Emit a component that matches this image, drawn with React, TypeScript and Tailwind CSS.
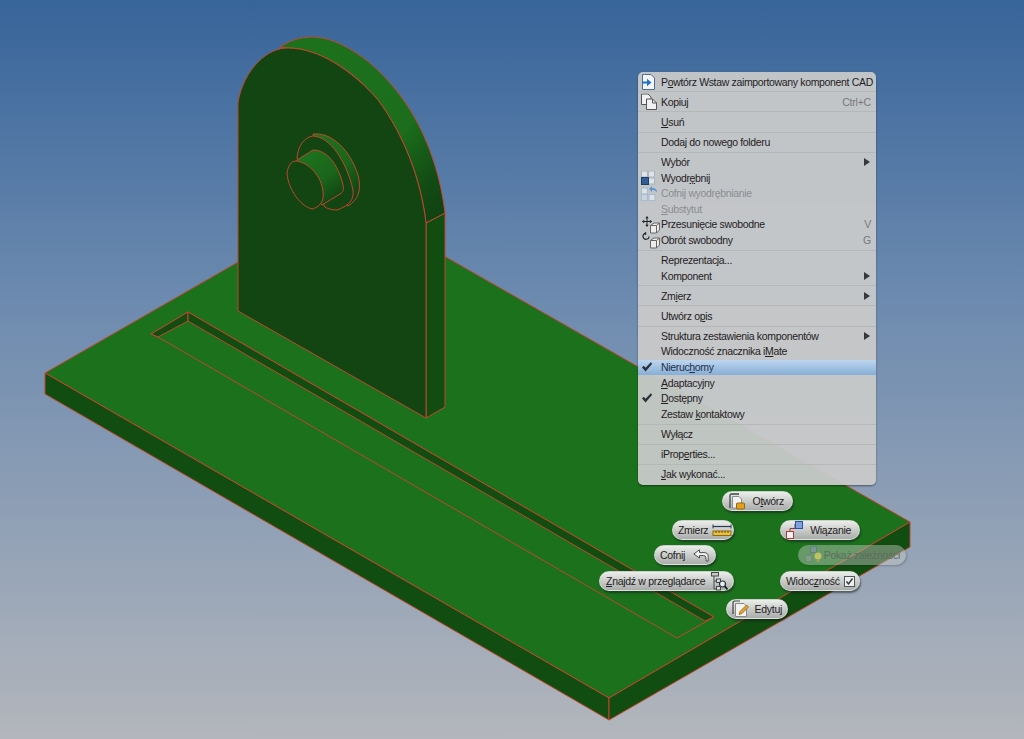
import React from "react";

const F = "font-['Liberation_Sans',Arial,sans-serif]";

function Scene() {
  return (
    <svg viewBox="0 0 1024 739" className="block w-[1024px] h-[739px]">
      <defs>
        <linearGradient id="sky" x1="0" y1="0" x2="0" y2="1">
          <stop offset="0" stopColor="#37649a" />
          <stop offset="0.4" stopColor="#6c8aaf" />
          <stop offset="1" stopColor="#b3b6bc" />
        </linearGradient>
        <linearGradient id="rim" x1="0" y1="0" x2="1" y2="1">
          <stop offset="0" stopColor="#1d721d" />
          <stop offset="0.62" stopColor="#1c6e1c" />
          <stop offset="0.85" stopColor="#124a14" />
          <stop offset="1" stopColor="#104012" />
        </linearGradient>
        <linearGradient id="boss" x1="0.2" y1="0.05" x2="0.8" y2="0.95">
          <stop offset="0" stopColor="#1d721d" />
          <stop offset="0.55" stopColor="#1a661b" />
          <stop offset="1" stopColor="#114212" />
        </linearGradient>
      </defs>
      <rect width="1024" height="739" fill="url(#sky)" />
      <g stroke="#c2452e" strokeWidth="1" strokeLinejoin="round">
        <path d="M45 373 L346 200 L910 522 L609 698 Z" fill="#1c711d" />
        <path d="M45 373 L609 698 L609 720 L45 394 Z" fill="#114c10" />
        <path d="M609 698 L910 522 L910 547 L609 720 Z" fill="#114c10" />
        <path d="M188 312 L714 617 L677 638 L158 337 L151 334 Z" fill="#1c711d" />
        <path d="M151 334 L188 312 L188 321 L158 337 Z" fill="#114c10" />
        <path d="M188 312 L714 617 L705 621 L188 321 Z" fill="#114c10" />
        <path d="M426 418 L445 407 L445 213 L426 223 Z" fill="#114c10" />
        <path d="M280 47 C291 40 301 37 311 37 C324 37 336 41 348 48 C368 59 386 76 402 98 C424 128 440 170 445 213 L426 223 C421 180 404 135 378 100 C355 72 322 50 290 48 C285 48 283 47 280 47 Z" fill="url(#rim)" />
        <path d="M238 311 L238 103 C240 88 248 72 258 62 C268 52 278 48 288 48 C318 48 352 70 378 100 C404 135 421 180 426 223 L426 418 Z" fill="#124512" />
        <path d="M313 134 C332 132 350 150 358 175 C362 190 358 200 348 206 L330 196 Z" fill="url(#boss)" />
        <path d="M297 158 C298 145 305 137 313 136 C330 137 346 160 353 190 C354 200 350 205 337 210 C332 210 328 209 325 207 Z" fill="#124512" />
        <path d="M297 160 L313 150 C327 150 338 164 343 185 C344 190 343 192 340 194 L322 205 L300 185 Z" fill="url(#boss)" />
        <path d="M287 173 C288 166 291 161 296 161 C308 162 322 176 323 192 C324 200 322 205 313 209 C302 208 288 190 287 173 Z" fill="#124512" />
      </g>
    </svg>
  );
}

function U({ children }: { children: React.ReactNode }) {
  return <span className="underline underline-offset-1">{children}</span>;
}

function IconRepeat() {
  return (
    <svg width="15" height="16" viewBox="0 0 15 16">
      <path d="M3.5 .5H10L13.5 4V15.5H1.5V.5Z" fill="#f4f6f9" stroke="#4c6c98" />
      <path d="M1 7.5H6V4.8L10.5 8.5 6 12.2V9.5H1Z" fill="#1f73c9" />
    </svg>
  );
}
function IconCopy() {
  return (
    <svg width="17" height="17" viewBox="0 0 17 17" fill="#f1f1f1" stroke="#555">
      <path d="M.5 .5H7L10 3.5V11H.5Z" />
      <path d="M5.5 5.5H11.5L15.5 9.5V16H5.5Z" />
      <path d="M11.5 5.5V9.5H15.5" fill="none" />
    </svg>
  );
}
function IconIsolate() {
  return (
    <svg width="15" height="15" viewBox="0 0 15 15">
      <rect x=".5" y=".5" width="6" height="6" fill="#dfe3e7" stroke="#a9b3bd" />
      <rect x="7.5" y=".5" width="6" height="6" fill="#dfe3e7" stroke="#a9b3bd" />
      <rect x="7.5" y="7.5" width="6" height="6" fill="#dfe3e7" stroke="#a9b3bd" />
      <rect x=".5" y="7" width="7" height="7" fill="#2f5f95" stroke="#1e3f66" />
    </svg>
  );
}
function IconUndoIsolate() {
  return (
    <svg width="18" height="17" viewBox="0 0 18 17">
      <rect x=".5" y="3.5" width="6" height="6" fill="#dce1e6" stroke="#a7bace" />
      <rect x=".5" y="10" width="6" height="6" fill="#c8d3de" stroke="#a7bace" />
      <rect x="8" y="10" width="6" height="6" fill="#dce1e6" stroke="#a7bace" />
      <path d="M8 4.5 11 1.5V3.5C14 3.5 16 4.5 16 8 14.5 6 13 5.5 11 5.5V7.5Z" fill="#5e97cf" />
    </svg>
  );
}
function IconMove() {
  return (
    <svg width="20" height="18" viewBox="0 0 20 18">
      <path d="M6 1V10M1.5 5.5H10.5" stroke="#222" strokeWidth="1" fill="none" />
      <path d="M6 0 4.3 2.2H7.7ZM6 11 4.3 8.8H7.7ZM1 5.5 3.2 3.8V7.2ZM11 5.5 8.8 3.8V7.2Z" fill="#222" />
      <path d="M9.5 9.5 13 7H18.5V14L15.5 17H9.5Z" fill="#ececec" stroke="#666" />
      <path d="M9.5 9.5H15.5V17M15.5 9.5 18.5 7" fill="none" stroke="#666" />
    </svg>
  );
}
function IconRotate() {
  return (
    <svg width="20" height="18" viewBox="0 0 20 18">
      <path d="M8 5.5A3 3 0 1 1 4 2.5" fill="none" stroke="#222" strokeWidth="1.1" />
      <path d="M5.2 .8 2.6 2.5 5.2 4.2Z" fill="#222" />
      <path d="M9.5 9.5 13 7H18.5V14L15.5 17H9.5Z" fill="#ececec" stroke="#666" />
      <path d="M9.5 9.5H15.5V17M15.5 9.5 18.5 7" fill="none" stroke="#666" />
    </svg>
  );
}
function IconCheck() {
  return (
    <svg width="12" height="11" viewBox="0 0 12 11">
      <path d="M1 6 2.8 4.2 4.6 6.3 9.8 .8 11.2 2.2 4.6 10Z" fill="#2a3138" />
    </svg>
  );
}

type Row =
  | { k: "sep" }
  | {
      k?: "row";
      t: React.ReactNode;
      icon?: React.ReactNode;
      sc?: string;
      sub?: boolean;
      off?: boolean;
      hi?: boolean;
    };

const rows: Row[] = [
  { t: <>P<U>o</U>wtórz Wstaw zaimportowany komponent CAD</>, icon: <IconRepeat /> },
  { k: "sep" },
  { t: "Kopiuj", icon: <IconCopy />, sc: "Ctrl+C" },
  { k: "sep" },
  { t: <><U>U</U>suń</> },
  { k: "sep" },
  { t: <>Dodaj do nowe<U>g</U>o folderu</> },
  { k: "sep" },
  { t: "Wybór", sub: true },
  { t: <>Wyodr<U>ę</U>bnij</>, icon: <IconIsolate /> },
  { t: "Cofnij wyodrębnianie", icon: <IconUndoIsolate />, off: true },
  { t: <><U>S</U>ubstytut</>, off: true },
  { t: "Przesunięcie swobodne", icon: <IconMove />, sc: "V" },
  { t: "Obrót swobodny", icon: <IconRotate />, sc: "G" },
  { k: "sep" },
  { t: "Reprezentacja..." },
  { t: "Komponent", sub: true },
  { k: "sep" },
  { t: <>Zm<U>i</U>erz</>, sub: true },
  { k: "sep" },
  { t: <>Utwórz o<U>p</U>is</> },
  { k: "sep" },
  { t: "Struktura zestawienia komponentów", sub: true },
  { t: <>Widoczność znacznika i<U>M</U>ate</> },
  { t: <>Nieruc<U>h</U>omy</>, icon: <IconCheck />, hi: true },
  { t: <><U>A</U>daptacyjny</> },
  { t: <><U>D</U>ostępny</>, icon: <IconCheck /> },
  { t: <>Zestaw <U>k</U>ontaktowy</> },
  { k: "sep" },
  { t: "Wyłącz" },
  { k: "sep" },
  { t: <>iProp<U>e</U>rties...</> },
  { k: "sep" },
  { t: <><U>J</U>ak wykonać...</> },
];

function Menu() {
  return (
    <div className={`absolute left-[638px] top-[72px] w-[238px] pt-[2px] pb-[3px] rounded-[5px] bg-[#c8c9c9]/95 shadow-[0_1px_2px_rgba(0,0,0,0.45)] text-[10.5px] leading-none text-[#1f2123] ${F}`}>
      {rows.map((r, i) =>
        r.k === "sep" ? (
          <div key={i} className="h-[4.5px] flex items-center">
            <div className="h-px flex-1 bg-[#b6b7b7]" />
          </div>
        ) : (
          <div
            key={i}
            className={`relative h-[15.6px] pl-[23px] pr-[5px] flex items-center ${r.hi ? "bg-gradient-to-b from-[#bdd6ef] to-[#87aed6] text-[#1d2f4a]" : ""} ${r.off ? "text-[#8b8d8f]" : ""}`}
          >
            {r.icon && <span className="absolute left-[3px] top-1/2 -translate-y-1/2 flex">{r.icon}</span>}
            <span className="flex-1 whitespace-nowrap tracking-[-0.34px]">{r.t}</span>
            {r.sc && <span className="text-[#77797b] tracking-[-0.2px]">{r.sc}</span>}
            {r.sub && <span className="w-0 h-0 mr-[1px] border-y-[4.5px] border-y-transparent border-l-[6px] border-l-[#35383c]" />}
          </div>
        )
      )}
    </div>
  );
}

function Pill({
  className,
  children,
}: {
  className: string;
  children: React.ReactNode;
}) {
  return (
    <div
      className={`absolute h-[20px] rounded-[10px] flex items-center justify-between whitespace-nowrap text-[10.5px] leading-none tracking-[-0.3px] text-[#1e2022] border border-[#d9dbd8]/70 bg-gradient-to-b from-[#eceeeb] to-[#a9acaa] shadow-[1px_2px_2px_rgba(20,30,30,0.55)] ${F} ${className}`}
    >
      {children}
    </div>
  );
}

const IOpen = () => (
  <svg width="17" height="17" viewBox="0 0 17 17">
    <path d="M1 15V2.5Q1 1 2.5 1H10" fill="none" stroke="#3d4447" strokeWidth="1.3" />
    <path d="M3.5 3.5H10L12.5 6V15H3.5Z" fill="#f2f2f2" stroke="#8a8d8e" />
    <rect x="7.5" y="10" width="8" height="6" rx="1" fill="#e0a21e" stroke="#94690f" />
  </svg>
);
const IMeasure = () => (
  <svg width="20" height="14" viewBox="0 0 20 14">
    <path d="M1 3.5H19" stroke="#2a3a55" strokeWidth="1.2" />
    <path d="M1 1.5V5.5M19 1.5V5.5" stroke="#2a3a55" />
    <rect x="1" y="8" width="18" height="4.5" fill="#e9c042" stroke="#8b6b14" />
    <path d="M4 8V10M7 8V10M10 8V10M13 8V10M16 8V10" stroke="#6f5510" />
  </svg>
);
const IConstraint = () => (
  <svg width="18" height="18" viewBox="0 0 18 18">
    <path d="M4 11.5V7.5H9V3" fill="none" stroke="#8b3a3a" />
    <rect x="9.5" y=".5" width="7" height="7" fill="#7ea3dc" stroke="#2b52a8" />
    <rect x=".5" y="10.5" width="7" height="7" fill="#f2f2f2" stroke="#b43a3a" />
  </svg>
);
const IDepend = () => (
  <svg width="18" height="18" viewBox="0 0 18 18" opacity="0.75">
    <path d="M4 11.5V7.5H9V3" fill="none" stroke="#6d8a72" />
    <rect x="5.5" y=".5" width="6" height="6" fill="#7d9a9c" stroke="#5d7f86" />
    <rect x=".5" y="9.5" width="6" height="6" fill="#8aa28e" stroke="#6f8a78" />
    <circle cx="13" cy="10" r="3.5" fill="#d9cf62" />
    <rect x="11.5" y="13" width="3" height="3" fill="#a9a85a" />
  </svg>
);
const IUndo = () => (
  <svg width="16" height="13" viewBox="0 0 16 13">
    <path d="M6.5 .8 .8 5 6.5 9V6.5H10.5Q13 6.5 13 9V12H15.2V7.5Q15.2 3.6 11 3.6H6.5Z" fill="#f5f6f4" stroke="#4d5052" strokeLinejoin="round" />
  </svg>
);
const IFind = () => (
  <svg width="17" height="19" viewBox="0 0 17 19" fill="none">
    <rect x=".5" y=".5" width="7" height="3.5" fill="#c8cac9" stroke="#45494b" />
    <path d="M3 4V17H6M3 9H6" stroke="#45494b" />
    <rect x="5.5" y="7" width="4" height="3.5" fill="#d8dad9" stroke="#45494b" />
    <rect x="5.5" y="14.5" width="4" height="3.5" fill="#d8dad9" stroke="#45494b" />
    <circle cx="11.5" cy="12" r="3" fill="#e6eef5" stroke="#2c3336" strokeWidth="1.2" />
    <path d="M13.7 14.2 16.5 17.5" stroke="#1a1d1f" strokeWidth="1.8" />
  </svg>
);
const ICheckBox = () => (
  <svg width="11" height="11" viewBox="0 0 11 11">
    <rect x=".5" y=".5" width="10" height="10" fill="#eceeee" stroke="#50565a" />
    <path d="M2.5 5.5 4.5 8 8.5 2.5" fill="none" stroke="#2a2e30" strokeWidth="1.3" />
  </svg>
);
const IEdit = () => (
  <svg width="18" height="18" viewBox="0 0 18 18">
    <path d="M1 14V3Q1 1 3 1H8" fill="none" stroke="#3d4447" strokeWidth="1.2" />
    <path d="M3.5 3.5H12L14.5 6V16.5H3.5Z" fill="#f2f2f2" stroke="#888" />
    <path d="M7 14.5 8 11.5 14.5 5 16.5 7 10 13.5Z" fill="#e2a32a" stroke="#8d5f14" strokeWidth=".7" />
  </svg>
);

export default function App() {
  return (
    <div className="relative w-[1024px] h-[739px] overflow-hidden">
      <Scene />
      <Menu />
      <Pill className="left-[722px] top-[491px] w-[71px] pl-[6px] pr-[8px]">
        <IOpen />
        <span>O<U>t</U>wórz</span>
      </Pill>
      <Pill className="left-[672px] top-[520px] w-[62px] pl-[5px] pr-[1px]">
        <span>Zmierz</span>
        <IMeasure />
      </Pill>
      <Pill className="left-[780px] top-[520px] w-[80px] pl-[5px] pr-[8px]">
        <IConstraint />
        <span>Wiązanie</span>
      </Pill>
      <Pill className="left-[654px] top-[545px] w-[62px] pl-[5px] pr-[6px]">
        <span>Cofnij</span>
        <IUndo />
      </Pill>
      <div className={`absolute left-[798px] top-[545px] w-[108px] h-[20px] rounded-[10px] flex items-center justify-between pl-[7px] pr-[6px] whitespace-nowrap text-[10.5px] leading-none tracking-[-0.3px] text-[#5e6d60] bg-[#c6c9c6]/45 shadow-[1px_1px_2px_rgba(20,30,30,0.25)] ${F}`}>
        <IDepend />
        <span>Pokaż zależności</span>
      </div>
      <Pill className="left-[599px] top-[571px] w-[135px] pl-[6px] pr-[5px]">
        <span><U>Z</U>najdź w przeglądarce</span>
        <IFind />
      </Pill>
      <Pill className="left-[780px] top-[571px] w-[80px] pl-[5px] pr-[4px]">
        <span>Widoc<U>z</U>ność</span>
        <ICheckBox />
      </Pill>
      <Pill className="left-[726px] top-[599px] w-[62px] pl-[5px] pr-[5px]">
        <IEdit />
        <span>Edytu<U>j</U></span>
      </Pill>
    </div>
  );
}
